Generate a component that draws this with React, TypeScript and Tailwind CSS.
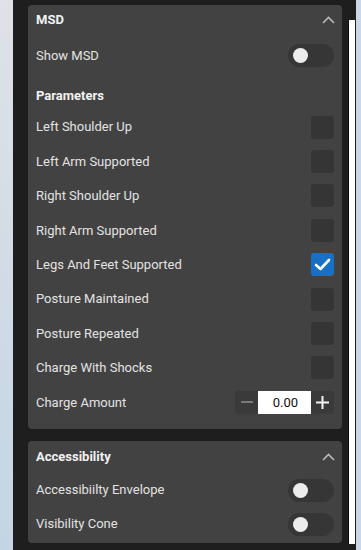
import React from "react";

const font = { fontFamily: "Roboto, 'Noto Sans', sans-serif" };

function Chevron() {
  return (
    <svg width="13" height="8" viewBox="0 0 13 8" className="block">
      <polyline points="1,7 6.5,1.5 12,7" fill="none" stroke="#b8b8b8" strokeWidth="1.6" />
    </svg>
  );
}

function Toggle() {
  return (
    <div className="w-[46px] h-[23px] rounded-full bg-[#363636] flex items-center pl-[5px]">
      <div className="w-[15px] h-[15px] rounded-full bg-[#ececec]" />
    </div>
  );
}

function Checkbox({ checked }: { checked?: boolean }) {
  if (checked) {
    return (
      <div className="w-[23px] h-[23px] rounded-[3px] bg-[#1770c4] flex items-center justify-center">
        <svg width="17" height="13" viewBox="0 0 17 13">
          <polyline points="2,7 6.5,11 15,2" fill="none" stroke="#ffffff" strokeWidth="2.6" strokeLinecap="round" strokeLinejoin="round" />
        </svg>
      </div>
    );
  }
  return <div className="w-[23px] h-[23px] rounded-[3px] bg-[#353535]" />;
}

function Stepper() {
  return (
    <div className="flex h-[23px] rounded-[3px] bg-[#3a3a3a] overflow-hidden">
      <div className="w-[23px] flex items-center justify-center">
        <div className="w-[12px] h-[2px] bg-[#7a7a7a]" />
      </div>
      <div className="w-[53px] bg-white flex items-center justify-center text-[13px] text-[#111] pl-[2px]">0.00</div>
      <div className="w-[23px] flex items-center justify-center">
        <svg width="15" height="15" viewBox="0 0 15 15">
          <line x1="7.5" y1="1" x2="7.5" y2="14" stroke="#f4f4f4" strokeWidth="2" />
          <line x1="1" y1="7.5" x2="14" y2="7.5" stroke="#f4f4f4" strokeWidth="2" />
        </svg>
      </div>
    </div>
  );
}

function Row({ label, children, h = "h-[34.4px]" }: { label: string; children?: React.ReactNode; h?: string }) {
  return (
    <div className={`${h} flex items-center justify-between pl-[8px] pr-[8px]`}>
      <span className="text-[13px] text-[#e2e2e2]">{label}</span>
      {children}
    </div>
  );
}

export default function App() {
  const params: [string, boolean][] = [
    ["Left Shoulder Up", false],
    ["Left Arm Supported", false],
    ["Right Shoulder Up", false],
    ["Right Arm Supported", false],
    ["Legs And Feet Supported", true],
    ["Posture Maintained", false],
    ["Posture Repeated", false],
    ["Charge With Shocks", false],
  ];
  return (
    <div className="flex w-[361px] h-[550px] overflow-hidden" style={font}>
      <div className="w-[13px] h-full bg-gradient-to-b from-[#dfe2e7] to-[#c3d5e4]" />
      <div className="w-[343px] h-full bg-[#1e1e1e] flex">
        <div className="w-[329px] pl-[15px] pt-[5px] flex flex-col gap-[12px]">
          <div className="w-[314px] h-[424px] rounded-[4px] bg-[#424242] flex flex-col">
            <div className="h-[30px] flex items-center justify-between pl-[8px] pr-[7px]">
              <span className="text-[13px] font-bold text-[#f2f2f2]">MSD</span>
              <Chevron />
            </div>
            <Row label="Show MSD" h="h-[41px]">
              <Toggle />
            </Row>
            <div className="h-[34px] pt-[6px] flex items-center pl-[8px]">
              <span className="text-[13px] font-bold text-[#f2f2f2]">Parameters</span>
            </div>
            {params.map(([l, c]) => (
              <Row key={l} label={l}>
                <Checkbox checked={c} />
              </Row>
            ))}
            <Row label="Charge Amount">
              <Stepper />
            </Row>
          </div>
          <div className="w-[314px] h-[102px] rounded-[4px] bg-[#424242] flex flex-col">
            <div className="h-[32px] flex items-center justify-between pl-[8px] pr-[7px]">
              <span className="text-[13px] font-bold text-[#f2f2f2]">Accessibility</span>
              <Chevron />
            </div>
            <Row label="Accessibiilty Envelope" h="h-[34px]">
              <Toggle />
            </Row>
            <Row label="Visibility Cone" h="h-[34px]">
              <Toggle />
            </Row>
          </div>
        </div>
        <div className="ml-[6px] mt-[20px] w-[7px] h-[524px] border-l border-[#0e0e0e] bg-white" />
      </div>
      <div className="flex-1 h-full bg-[#c8d8e6]" />
    </div>
  );
}
